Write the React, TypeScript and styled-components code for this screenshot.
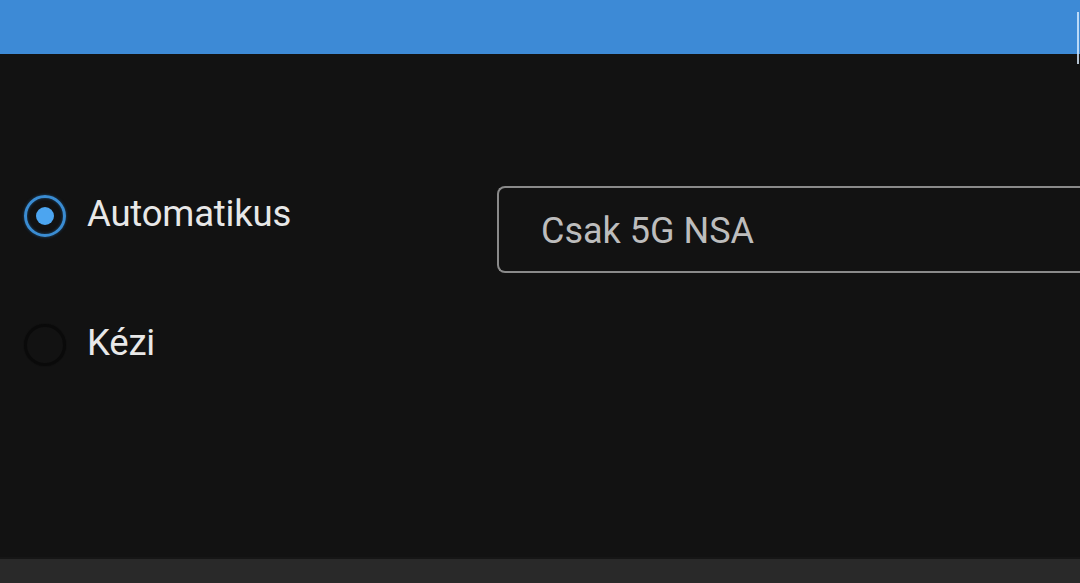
import styled, { createGlobalStyle } from 'styled-components';

const GlobalStyle = createGlobalStyle`
  html, body {
    margin: 0;
    padding: 0;
    background: #121212;
  }
  body {
    font-family: Roboto, "Noto Sans", sans-serif;
    overflow: hidden;
  }
`;

const Screen = styled.div`
  position: relative;
  width: 1080px;
  height: 583px;
  display: flex;
  flex-direction: column;
  background: #121212;
`;

const Header = styled.div`
  height: 54px;
  background: #3d8ad6;
  flex-shrink: 0;
`;

const ScrollMark = styled.div`
  position: absolute;
  right: 1px;
  top: 12px;
  width: 2px;
  height: 52px;
  background: #dceeff;
  opacity: 0.8;
`;

const Body = styled.div`
  flex: 1;
  display: flex;
  align-items: flex-start;
  padding-top: 132px;
`;

const RadioGroup = styled.div`
  width: 497px;
  margin-top: 8px;
  display: flex;
  flex-direction: column;
  gap: 85px;
  padding-left: 24px;
  box-sizing: border-box;
`;

const RadioRow = styled.label`
  display: flex;
  align-items: center;
  gap: 21px;
  height: 44px;
`;

const RadioCircle = styled.span<{ $checked?: boolean }>`
  width: 42px;
  height: 42px;
  border-radius: 50%;
  box-sizing: border-box;
  display: flex;
  align-items: center;
  justify-content: center;
  border: 3px solid ${(p) => (p.$checked ? '#3a8cd2' : '#0a0a0a')};
  box-shadow: ${(p) =>
    p.$checked ? '0 0 3px #1c4a73, inset 0 0 3px #1c4a73' : '0 0 1px #050505'};

  &::after {
    content: '';
    display: ${(p) => (p.$checked ? 'block' : 'none')};
    width: 18px;
    height: 18px;
    border-radius: 50%;
    background: #4ca5f0;
  }
`;

const RadioText = styled.span`
  font-size: 36.5px;
  color: #e8e8e8;
  letter-spacing: -0.2px;
  margin-top: -6px;
`;

const SelectBox = styled.div`
  flex: 1;
  height: 87px;
  box-sizing: border-box;
  border: 2px solid #8a8a8a;
  border-right: none;
  border-radius: 8px 0 0 8px;
  display: flex;
  align-items: center;
  padding-left: 42px;
  padding-top: 2px;
  font-size: 36px;
  color: #bdbdbd;
`;

const Footer = styled.div`
  height: 24px;
  background: #292929;
  border-top: 2px solid #161616;
  flex-shrink: 0;
`;

export default function App() {
  return (
    <Screen>
      <GlobalStyle />
      <Header />
      <ScrollMark />
      <Body>
        <RadioGroup>
          <RadioRow>
            <RadioCircle $checked />
            <RadioText>Automatikus</RadioText>
          </RadioRow>
          <RadioRow>
            <RadioCircle />
            <RadioText>Kézi</RadioText>
          </RadioRow>
        </RadioGroup>
        <SelectBox>Csak 5G NSA</SelectBox>
      </Body>
      <Footer />
    </Screen>
  );
}
